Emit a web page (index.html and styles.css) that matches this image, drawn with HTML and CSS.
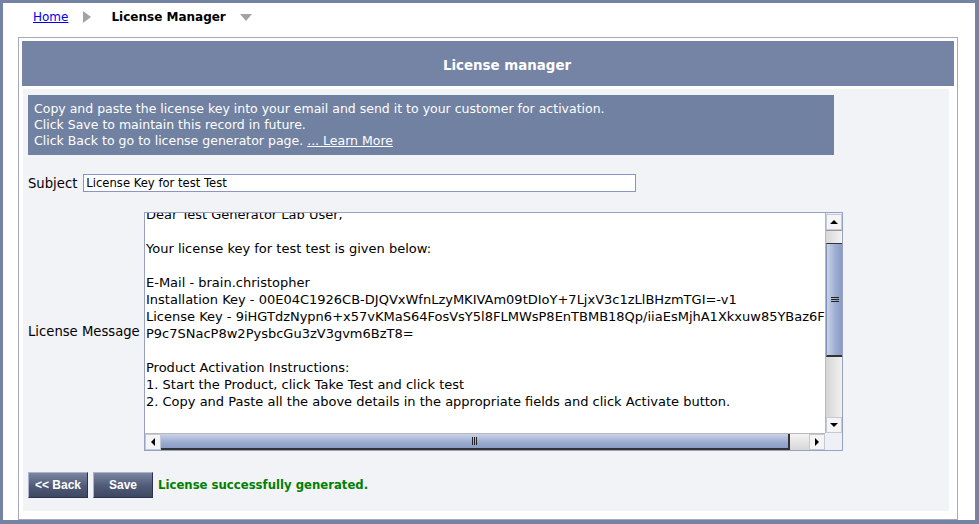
FILE: index.html
```html
<!DOCTYPE html>
<html>
<head>
<meta charset="utf-8">
<link rel="stylesheet" href="styles.css">
</head>
<body>
<div class="frame">
  <div class="crumbs">
    <a class="home" href="#">Home</a>
    <span class="arrow-right"></span>
    <span class="current">License Manager</span>
    <span class="arrow-down"></span>
  </div>
  <div class="panel">
    <div class="panel-head">License manager</div>
    <div class="panel-body">
      <div class="info">
        <div>Copy and paste the license key into your email and send it to your customer for activation.</div>
        <div>Click Save to maintain this record in future.</div>
        <div>Click Back to go to license generator page. <a class="learn" href="#">... Learn More</a></div>
      </div>
      <div class="subject-row">
        <label class="lbl">Subject</label>
        <input class="subject-input" type="text" value="License Key for test Test">
      </div>
      <div class="msg-row">
        <label class="lbl msg-lbl">License Message</label>
        <div class="textarea">
          <div class="ta-view">
            <div class="ta-text">Dear Test Generator Lab User,

Your license key for test test is given below:

E-Mail - brain.christopher
Installation Key - 00E04C1926CB-DJQVxWfnLzyMKIVAm09tDIoY+7LjxV3c1zLlBHzmTGI=-v1
License Key - 9iHGTdzNypn6+x57vKMaS64FosVsY5l8FLMWsP8EnTBMB18Qp/iiaEsMjhA1Xkxuw85YBaz6Fk4qRt
P9c7SNacP8w2PysbcGu3zV3gvm6BzT8=

Product Activation Instructions:
1. Start the Product, click Take Test and click test
2. Copy and Paste all the above details in the appropriate fields and click Activate button.</div>
          </div>
          <div class="vbar">
            <div class="sb-btn up"><span class="tri-up"></span></div>
            <div class="v-track-a"></div>
            <div class="v-thumb"><span class="grip-h"></span></div>
            <div class="v-track-b"></div>
            <div class="sb-btn down"><span class="tri-down"></span></div>
          </div>
          <div class="hbar">
            <div class="sb-btn left"><span class="tri-left"></span></div>
            <div class="h-thumb"><span class="grip-v"></span></div>
            <div class="h-track"></div>
            <div class="sb-btn right"><span class="tri-right"></span></div>
          </div>
          <div class="corner"></div>
        </div>
      </div>
      <div class="actions">
        <button class="btn">&lt;&lt; Back</button>
        <button class="btn">Save</button>
        <span class="ok">License successfully generated.</span>
      </div>
    </div>
  </div>
</div>
</body>
</html>
```

FILE: styles.css
```css
html, body {
  margin: 0;
  padding: 0;
}
body {
  width: 979px;
  height: 524px;
  overflow: hidden;
  background: #ffffff;
  font-family: "DejaVu Sans", Verdana, sans-serif;
}
.frame {
  box-sizing: border-box;
  width: 979px;
  height: 524px;
  border-style: solid;
  border-color: #7483a3;
  border-width: 3px 4px 4px 3px;
  display: flex;
  flex-direction: column;
}
.crumbs {
  height: 34px;
  box-sizing: border-box;
  padding: 7px 0 0 30px;
  display: flex;
  align-items: flex-start;
  font-size: 12px;
  line-height: 14px;
}
.home {
  color: #0000ee;
  text-decoration: underline;
}
.arrow-right {
  width: 0;
  height: 0;
  margin: 1px 20px 0 15px;
  border-top: 6px solid transparent;
  border-bottom: 6px solid transparent;
  border-left: 8px solid #a3a3a3;
}
.current {
  font-weight: bold;
  color: #000;
}
.arrow-down {
  width: 0;
  height: 0;
  margin: 4px 0 0 14px;
  border-left: 6.5px solid transparent;
  border-right: 6.5px solid transparent;
  border-top: 7px solid #a3a3a3;
}
.panel {
  margin-left: 15px;
  width: 940px;
  height: 483px;
  box-sizing: border-box;
  border: 1px solid #a3a9c1;
  padding: 3px;
  display: flex;
  flex-direction: column;
}
.panel-head {
  height: 45px;
  box-sizing: border-box;
  padding: 3px 0 0 38px;
  background: #7584a4;
  color: #ffffff;
  font-weight: bold;
  font-size: 13.4px;
  display: flex;
  align-items: center;
  justify-content: center;
  flex-shrink: 0;
}
.panel-body {
  margin: 3px 5px 5px 1px;
  flex: 1;
  background: #f2f3f7;
  padding: 6px 0 0 5px;
  display: flex;
  flex-direction: column;
  font-size: 12px;
}
.info {
  width: 806px;
  box-sizing: border-box;
  background: #7181a1;
  color: #ffffff;
  padding: 6px 6px;
  line-height: 16px;
  font-size: 12.5px;
}
.learn {
  color: #ffffff;
  text-decoration: underline;
}
.subject-row {
  margin-top: 19px;
  display: flex;
  align-items: center;
  height: 18px;
}
.lbl {
  color: #000;
  font-size: 13.2px;
}
.subject-input {
  margin: 0 0 0 6px;
  width: 553px;
  height: 18px;
  box-sizing: border-box;
  border: 1px solid #8b95c4;
  padding: 0 0 0 2px;
  font-family: "DejaVu Sans", Verdana, sans-serif;
  font-size: 11.6px;
  color: #000;
  background: #fff;
  outline: none;
}
.msg-row {
  margin-top: 20px;
  display: flex;
  align-items: center;
}
.msg-lbl {
  width: 116px;
  flex-shrink: 0;
}
.textarea {
  width: 699px;
  height: 239px;
  box-sizing: border-box;
  border: 1px solid #98a1c2;
  background: #fff;
  display: grid;
  grid-template-columns: 1fr 17px;
  grid-template-rows: 1fr 17px;
}
.ta-view {
  overflow: hidden;
  min-width: 0;
}
.ta-text {
  white-space: pre;
  font-size: 13px;
  line-height: 17px;
  margin-top: -7px;
  padding-left: 1px;
  color: #000;
}
.vbar {
  display: flex;
  flex-direction: column;
  background: #eeeeee;
  border-left: 1px solid #b8b8b8;
}
.hbar {
  display: flex;
  background: #eeeeee;
  border-top: 1px solid #b8b8b8;
}
.corner {
  background: #eef0f6;
}
.sb-btn {
  box-sizing: border-box;
  background: #f4f4f4;
  border: 1px solid #c4c8d8;
  display: flex;
  align-items: center;
  justify-content: center;
  flex-shrink: 0;
}
.sb-btn.up { height: 16px; margin-top: 1px; }
.sb-btn.down { height: 16px; }
.sb-btn.left { width: 16px; }
.sb-btn.right { width: 16px; }
.tri-up {
  border-left: 4px solid transparent;
  border-right: 4px solid transparent;
  border-bottom: 4px solid #000;
}
.tri-down {
  border-left: 4px solid transparent;
  border-right: 4px solid transparent;
  border-top: 4px solid #000;
}
.tri-left {
  border-top: 4px solid transparent;
  border-bottom: 4px solid transparent;
  border-right: 4px solid #000;
}
.tri-right {
  border-top: 4px solid transparent;
  border-bottom: 4px solid transparent;
  border-left: 4px solid #000;
}
.v-track-a {
  height: 12px;
  background: linear-gradient(to right, #d8d8d8, #f2f2f2);
  border-top: 1px solid #999;
}
.v-thumb {
  height: 114px;
  box-sizing: border-box;
  background: linear-gradient(to right, #c9d3e8, #9aabcf 60%, #8a9cc4);
  border-top: 1px solid #333;
  border-bottom: 2px solid #333;
  border-left: 1px solid #8090b0;
  display: flex;
  align-items: center;
  justify-content: center;
}
.grip-h {
  width: 8px;
  height: 5px;
  border-top: 1px solid #222;
  border-bottom: 1px solid #222;
  background: linear-gradient(#222 0 1px, transparent 1px);
  background-position: 0 1px;
  background-repeat: no-repeat;
  box-sizing: border-box;
}
.v-track-b {
  flex: 1;
  background: linear-gradient(to right, #d6d6d6, #f0f0f0);
}
.h-thumb {
  width: 629px;
  box-sizing: border-box;
  background: linear-gradient(#c9d3e8, #9aabcf 60%, #8a9cc4);
  border-right: 2px solid #333;
  border-bottom: 2px solid #333;
  display: flex;
  align-items: center;
  justify-content: center;
}
.grip-v {
  width: 5px;
  height: 8px;
  border-left: 1px solid #222;
  border-right: 1px solid #222;
  box-sizing: border-box;
  background: linear-gradient(to right, transparent 1px, #222 1px 2px, transparent 2px);
}
.h-track {
  flex: 1;
  background: linear-gradient(#f4f4f4, #d6d6d6);
}
.actions {
  margin-top: 21px;
  display: flex;
  align-items: center;
}
.btn {
  width: 60px;
  height: 26px;
  margin: 0 5px 0 0;
  box-sizing: border-box;
  background: linear-gradient(#7a85a2, #4f5a78 55%, #3e4862);
  border: 1px solid;
  border-color: #aab4d0 #2c3348 #2c3348 #aab4d0;
  color: #ffffff;
  font-family: "Liberation Sans", Arial, sans-serif;
  font-weight: bold;
  font-size: 12px;
  padding: 0;
}
.ok {
  color: #008000;
  font-weight: bold;
  font-size: 11.7px;
}
```
